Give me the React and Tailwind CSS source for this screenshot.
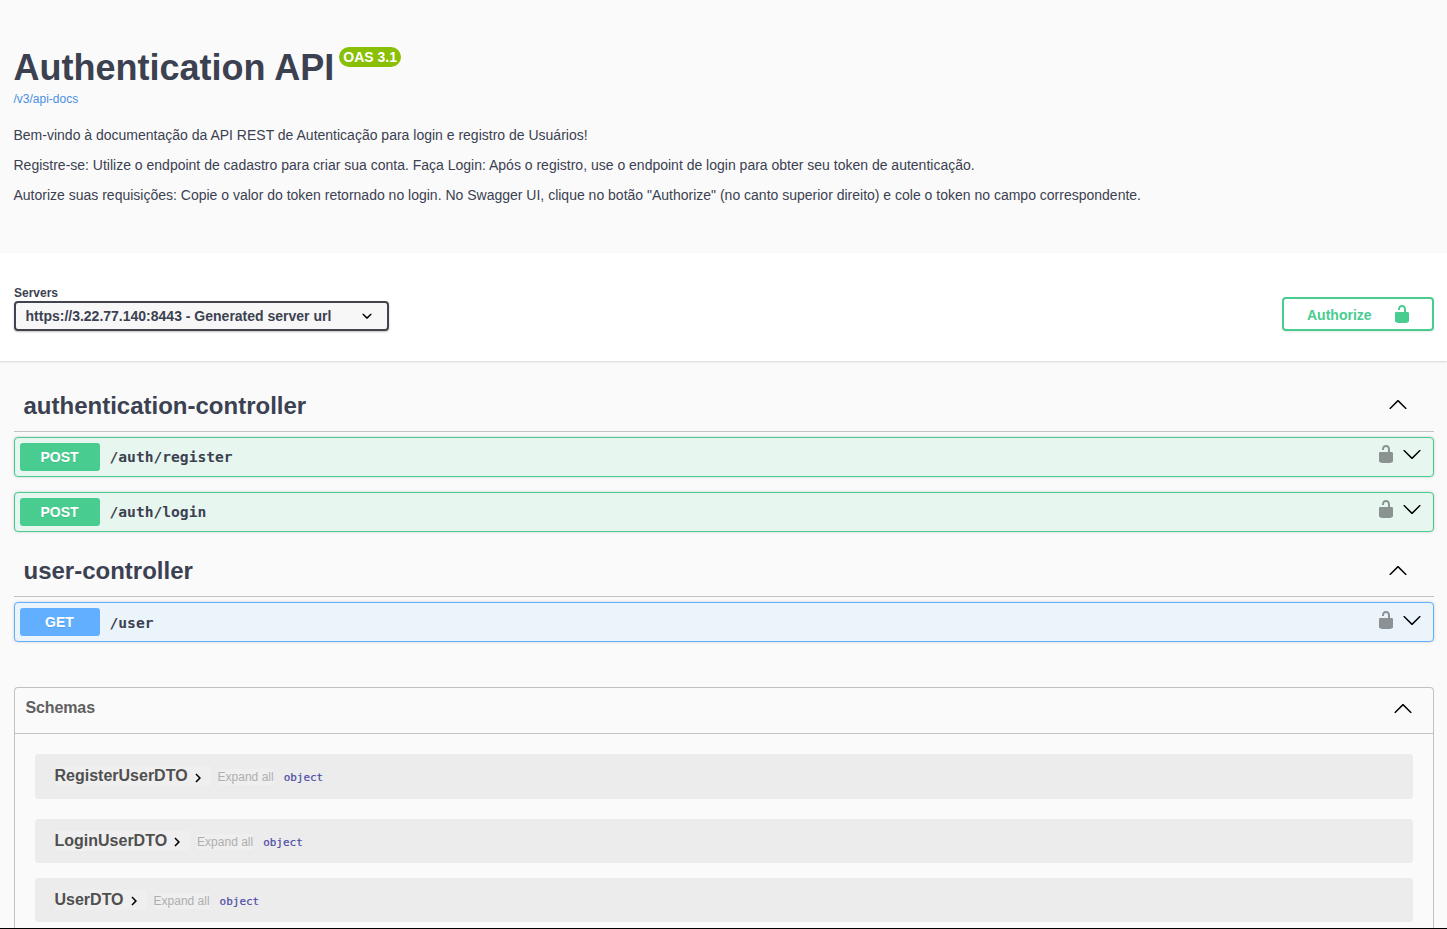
import React from "react";

const ARROW_UP =
  "M 17.418 14.908 C 17.69 15.176 18.127 15.176 18.397 14.908 C 18.667 14.64 18.668 14.207 18.397 13.939 L 10.489 6.109 C 10.219 5.841 9.782 5.841 9.51 6.109 L 1.602 13.939 C 1.332 14.207 1.332 14.64 1.602 14.908 C 1.873 15.176 2.311 15.176 2.581 14.908 L 10 7.767 L 17.418 14.908 Z";
const ARROW_DOWN =
  "M17.418 6.109c.272-.268.709-.268.979 0s.271.701 0 .969l-7.908 7.83c-.27.268-.707.268-.979 0l-7.908-7.83c-.27-.268-.27-.701 0-.969.271-.268.709-.268.979 0L10 13.25l7.418-7.141z";
const UNLOCKED =
  "M15.8 8H14V5.6C14 2.703 12.665 1 10 1 7.334 1 6 2.703 6 5.6V6h2v-.801C8 3.754 8.797 3 10 3c1.203 0 2 .754 2 2.199V8H4c-.553 0-1 .646-1 1.199V17c0 .549.428 1.139.951 1.307l1.197.387C5.672 18.861 6.55 19 7.1 19h5.8c.549 0 1.428-.139 1.951-.307l1.196-.387c.524-.167.953-.757.953-1.306V9.199C17 8.646 16.352 8 15.8 8z";
const SELECT_ARROW =
  "M13.418 7.859c.271-.268.709-.268.978 0 .27.268.272.701 0 .969l-3.908 3.83c-.27.268-.707.268-.979 0l-3.908-3.83c-.27-.267-.27-.701 0-.969.271-.268.709-.268.978 0L10 11l3.418-3.141z";

function Icon({ d, className = "" }) {
  return (
    <svg viewBox="0 0 20 20" className={`block size-5 shrink-0 ${className}`} fill="currentColor" aria-hidden="true">
      <path d={d} />
    </svg>
  );
}

function TagHeader({ name, className = "", iconClass = "mt-[16px]" }) {
  return (
    <h3
      className={`flex items-start justify-between border-b border-[#3b4151]/30 pr-[26px] pl-[9.5px] text-[24px] leading-[30px] font-bold text-[#3b4151] ${className}`}
    >
      <span className="mt-[12px]">{name}</span>
      <Icon d={ARROW_UP} className={`text-black ${iconClass}`} />
    </h3>
  );
}

const METHODS = {
  POST: { row: "border-[#49cc90] bg-[#e8f6f0]", badge: "bg-[#49cc90]" },
  GET: { row: "border-[#61affe] bg-[#ebf3fb]", badge: "bg-[#61affe]" },
};

function Operation({ method, path, className = "", iconClass = "mt-[6px]", pathClass = "leading-[37px]" }) {
  const style = METHODS[method];
  return (
    <div
      className={`flex h-10 rounded-[4px] border pl-[5px] pr-[11px] shadow-[0_0_3px_rgba(0,0,0,0.19)] ${style.row} ${className}`}
    >
      <span
        className={`mt-[5px] h-7 w-20 rounded-[3px] pr-px text-center text-[14px] leading-[28px] font-bold text-white [text-shadow:0_1px_0_rgba(0,0,0,0.1)] ${style.badge}`}
      >
        {method}
      </span>
      <span
        className={`ml-[9.5px] flex-1 font-['DejaVu_Sans_Mono',monospace] text-[14.62px] font-bold text-[#3b4151] ${pathClass}`}
      >
        {path}
      </span>
      <Icon d={UNLOCKED} className={`text-black opacity-40 ${iconClass}`} />
      <Icon d={ARROW_DOWN} className={`ml-[6px] text-black ${iconClass}`} />
    </div>
  );
}

function SchemaRow({ name, className = "", arrowClass = "mt-[3px]" }) {
  return (
    <div className={`flex items-start rounded-[4px] bg-[#ececec] pl-[19.5px] ${className}`}>
      <span className="mt-[12px] flex h-5 items-start bg-[#efefef]">
        <span className="text-[16px] leading-5 font-bold text-[#505050]">{name}</span>
        <svg viewBox="0 0 24 24" className={`ml-px block size-[18px] ${arrowClass}`} aria-hidden="true">
          <path d="M10 6L8.59 7.41 13.17 12l-4.58 4.59L10 18l6-6z" />
        </svg>
        <span className="w-[4px]" />
      </span>
      <span className="mt-[15px] ml-[7px] bg-[#efefef] text-[12px] leading-4 text-[#afaeae]">Expand all</span>
      <span className="mt-[16px] ml-[10px] font-['DejaVu_Sans_Mono',monospace] text-[10.96px] leading-4 text-[#4a4aa5] [-webkit-text-stroke:0.2px_#4a4aa5]">
        object
      </span>
    </div>
  );
}

export default function App() {
  return (
    <div className="flex h-[929px] w-full flex-col overflow-hidden border-b border-black bg-[#fafafa] font-['Liberation_Sans',Arial,sans-serif] text-[#3b4151]">
      <header className="h-[253px] shrink-0 px-[13.5px] pt-[47px]">
        <div className="flex items-start">
          <h1 className="text-[36px] leading-[42px] font-bold whitespace-nowrap">Authentication API</h1>
          <span className="ml-[5px] h-5 w-[62px] rounded-full bg-[#89bf04] text-center text-[14px] leading-[20px] font-bold whitespace-nowrap text-white">
            OAS 3.1
          </span>
        </div>
        <a className="mt-[2px] block text-[12px] leading-4 text-[#4990e2]">/v3/api-docs</a>
        <div className="mt-[20px] flex flex-col gap-[14px] text-[14px] leading-4 whitespace-nowrap">
          <p>Bem-vindo à documentação da API REST de Autenticação para login e registro de Usuários!</p>
          <p>
            Registre-se: Utilize o endpoint de cadastro para criar sua conta. Faça Login: Após o registro, use o
            endpoint de login para obter seu token de autenticação.
          </p>
          <p>
            Autorize suas requisições: Copie o valor do token retornado no login. No Swagger UI, clique no botão
            "Authorize" (no canto superior direito) e cole o token no campo correspondente.
          </p>
        </div>
      </header>

      <section className="flex h-[108px] shrink-0 justify-between bg-white pr-[13px] pl-[14px] shadow-[0_1px_2px_rgba(0,0,0,0.15)]">
        <div className="pt-[32px]">
          <div className="text-[12px] leading-4 font-bold">Servers</div>
          <div className="flex h-[30px] w-[375px] items-center justify-between rounded-[4px] border-2 border-[#41444e] bg-[#f7f7f7] pr-[10px] pl-[9.5px] text-[14px] font-bold shadow-[0_1px_2px_rgba(0,0,0,0.25)]">
            <span>https://3.22.77.140:8443 - Generated server url</span>
            <Icon d={SELECT_ARROW} className="text-black" />
          </div>
        </div>
        <button className="mt-[44px] flex h-[34px] w-[152px] items-center rounded-[4px] border-2 border-[#49cc90] pl-[23px] text-[14px] font-bold text-[#49cc90] shadow-[0_1px_2px_rgba(0,0,0,0.1)]">
          <span className="w-[85px] pt-[2px] text-left">Authorize</span>
          <Icon d={UNLOCKED} className="-mt-[1px]" />
        </button>
      </section>

      <main className="flex min-h-0 flex-1 flex-col pr-[13px] pl-[14px]">
        <TagHeader name="authentication-controller" className="mt-[18px] h-[53px] shrink-0" iconClass="mt-[15px]" />
        <Operation method="POST" path="/auth/register" className="mt-[5px] shrink-0" />
        <Operation method="POST" path="/auth/login" className="mt-[15px] shrink-0" />
        <TagHeader name="user-controller" className="mt-[12px] h-[53px] shrink-0" />
        <Operation
          method="GET"
          path="/user"
          className="mt-[5px] shrink-0"
          iconClass="mt-[7px]"
          pathClass="leading-[39px]"
        />

        <section className="mt-[45px] min-h-0 flex-1 overflow-hidden rounded-t-[4px] border border-b-0 border-[#3b4151]/30">
          <h4 className="flex h-[46px] items-start justify-between border-b border-[#3b4151]/30 pr-[20px] pl-[10.4px] text-[16px] leading-5 font-bold text-[#606060]">
            <span className="mt-[10px] tracking-[-0.1px]">Schemas</span>
            <Icon d={ARROW_UP} className="mt-[10px] text-black" />
          </h4>
          <div className="px-5 pt-5">
            <SchemaRow name="RegisterUserDTO" className="h-[45px]" />
            <SchemaRow name="LoginUserDTO" className="mt-5 h-[44px]" arrowClass="mt-[2px]" />
            <SchemaRow name="UserDTO" className="mt-[15px] h-[44px]" arrowClass="mt-[2px]" />
          </div>
        </section>
      </main>
    </div>
  );
}
